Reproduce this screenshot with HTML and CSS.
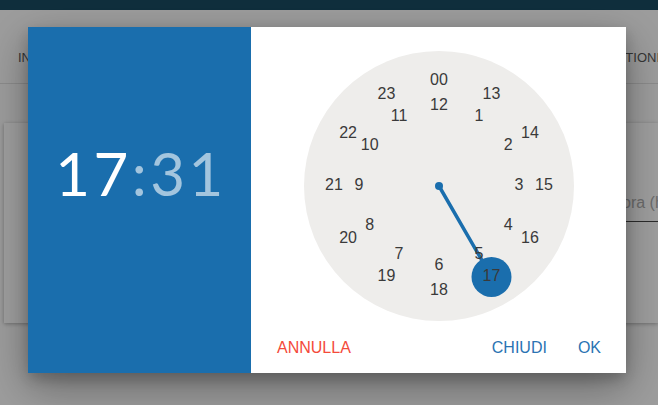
FILE: index.html
```html
<!DOCTYPE html>
<html lang="it">
<head>
<meta charset="utf-8">
<title>Selezione ora</title>
<link rel="stylesheet" href="styles.css">
</head>
<body>
<div class="page">
  <div class="topbar"></div>
  <div class="tabs">
    <span class="tab">INFORMAZIONI</span>
    <span class="tab tab-right">GESTIONI</span>
  </div>
  <div class="card">
    <div class="field">
      <span class="field-label">ora (hh:mm)</span>
    </div>
  </div>
</div>

<div class="overlay">
  <div class="dialog">
    <div class="header">
      <div class="time"><span class="hh">17</span><span class="mm">:31</span></div>
    </div>
    <div class="body">
      <div class="face-wrap">
        <div class="face">
          <svg class="hand" width="270" height="270" viewBox="0 0 270 270">
            <line x1="135" y1="135" x2="187.5" y2="225.9" stroke="#1a6ead" stroke-width="3.5" stroke-linecap="round"/>
            <circle cx="135" cy="135" r="4" fill="#1a6ead"/>
            <circle cx="187.5" cy="225.9" r="20" fill="#1a6ead"/>
          </svg>
          <span class="num" style="left:121px;top:44px">12</span>
          <span class="num" style="left:161px;top:54.7px">1</span>
          <span class="num" style="left:190.3px;top:84px">2</span>
          <span class="num" style="left:201px;top:124px">3</span>
          <span class="num" style="left:190.3px;top:164px">4</span>
          <span class="num" style="left:161px;top:193.3px">5</span>
          <span class="num" style="left:121px;top:204px">6</span>
          <span class="num" style="left:81px;top:193.3px">7</span>
          <span class="num" style="left:51.7px;top:164px">8</span>
          <span class="num" style="left:41px;top:124px">9</span>
          <span class="num" style="left:51.7px;top:84px">10</span>
          <span class="num" style="left:81px;top:54.7px">11</span>
          <span class="num" style="left:121px;top:19px">00</span>
          <span class="num" style="left:173.5px;top:33.1px">13</span>
          <span class="num" style="left:211.9px;top:71.5px">14</span>
          <span class="num" style="left:226px;top:124px">15</span>
          <span class="num" style="left:211.9px;top:176.5px">16</span>
          <span class="num" style="left:173.5px;top:214.9px">17</span>
          <span class="num" style="left:121px;top:229px">18</span>
          <span class="num" style="left:68.5px;top:214.9px">19</span>
          <span class="num" style="left:30.1px;top:176.5px">20</span>
          <span class="num" style="left:16px;top:124px">21</span>
          <span class="num" style="left:30.1px;top:71.5px">22</span>
          <span class="num" style="left:68.5px;top:33.1px">23</span>
        </div>
      </div>
      <div class="actions">
        <button class="btn btn-cancel">ANNULLA</button>
        <div class="actions-right">
          <button class="btn btn-primary">CHIUDI</button>
          <button class="btn btn-primary">OK</button>
        </div>
      </div>
    </div>
  </div>
</div>
</body>
</html>
```

FILE: styles.css
```css
* { box-sizing: border-box; }
html, body {
  margin: 0;
  padding: 0;
  width: 658px;
  height: 405px;
  overflow: hidden;
}
body {
  font-family: "Liberation Sans", Arial, sans-serif;
  background: #f7f7f7;
}
.page {
  height: 405px;
}
.topbar {
  height: 10px;
  background: #184a60;
}
.tabs {
  display: flex;
  justify-content: space-between;
  align-items: center;
  height: 74px;
  padding: 22px 0 0 18px;
  border-bottom: 1px solid #dcdcdc;
  font-family: "Liberation Sans", Arial, sans-serif;
  font-size: 13px;
  color: #555;
  overflow: hidden;
  white-space: nowrap;
}
.tab-right {
  margin-right: -2px;
}
.card {
  margin: 39px 0 0 4px;
  height: 200px;
  background: #fbfbfb;
  box-shadow: 0 1px 4px rgba(0,0,0,0.3);
  position: relative;
  overflow: hidden;
}
.field {
  margin: 62px 0 0 592px;
  height: 37px;
  border-bottom: 1px solid #444;
  display: flex;
  align-items: center;
  white-space: nowrap;
}
.field-label {
  font-size: 16px;
  color: #aaa;
  margin-left: 26px;
}

.overlay {
  position: fixed;
  inset: 0;
  background: rgba(0,0,0,0.37);
  padding: 27px 0 0 28px;
}
.dialog {
  display: flex;
  width: 598px;
  height: 346px;
  box-shadow: 0 14px 40px rgba(0,0,0,0.35), 0 6px 14px rgba(0,0,0,0.2);
}
.header {
  width: 223px;
  background: #1a6ead;
  display: flex;
  justify-content: center;
  align-items: flex-start;
  padding-top: 116px;
  padding-left: 3px;
}
.time {
  font-family: Lato, "Liberation Sans", sans-serif;
  font-size: 60px;
  line-height: 60px;
  color: #fff;
  letter-spacing: 3.5px;
}
.mm {
  color: rgba(255,255,255,0.6);
}
.body {
  flex: 1;
  background: #fff;
  display: flex;
  flex-direction: column;
}
.face-wrap {
  display: flex;
  justify-content: center;
  padding-top: 24px;
  padding-left: 1px;
}
.face {
  position: relative;
  width: 270px;
  height: 270px;
  border-radius: 50%;
  background: #eeedeb;
}
.hand {
  position: absolute;
  left: 0;
  top: 0;
}
.num {
  position: absolute;
  width: 28px;
  height: 20px;
  line-height: 20px;
  text-align: center;
  font-family: "Liberation Sans", Arial, sans-serif;
  font-size: 16px;
  color: #3a3a3a;
}
.actions {
  flex: 1;
  display: flex;
  justify-content: space-between;
  align-items: center;
  padding: 2px 17px 0 18px;
}
.actions-right {
  display: flex;
  gap: 15px;
}
.btn {
  border: none;
  background: none;
  padding: 6px 8px;
  font-family: "Liberation Sans", Arial, sans-serif;
  font-size: 16px;
  line-height: 20px;
  cursor: pointer;
}
.btn-cancel {
  color: #f44a3a;
}
.btn-primary {
  color: #2a73b3;
}
```
